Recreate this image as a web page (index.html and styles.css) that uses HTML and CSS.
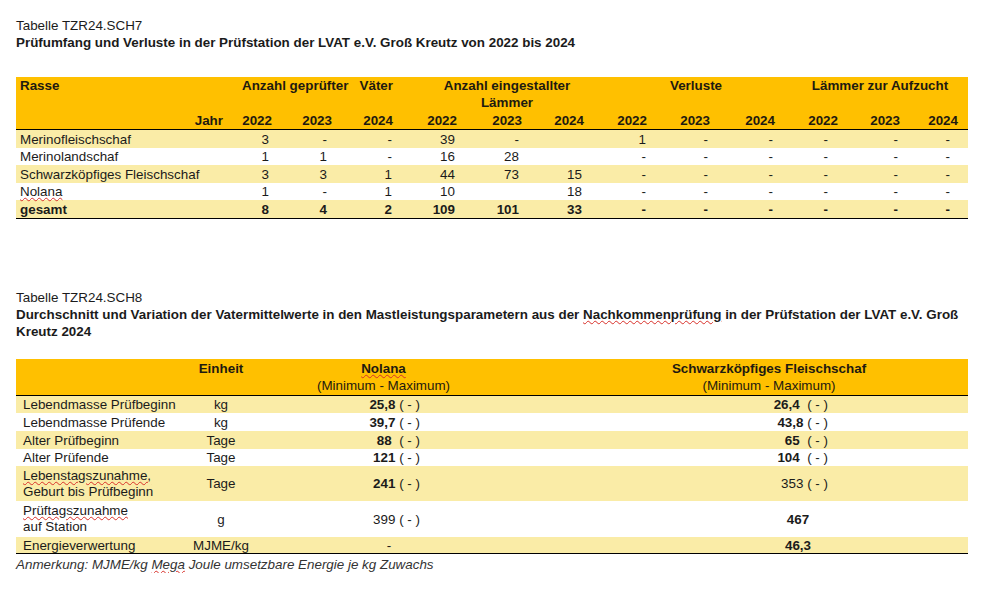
FILE: index.html
```html
<!DOCTYPE html>
<html lang="de">
<head>
<meta charset="utf-8">
<title>Tabelle TZR24.SCH7 / SCH8</title>
<link rel="stylesheet" href="styles.css">
</head>
<body>
<div class="page">
  <div class="cap">Tabelle TZR24.SCH7</div>
  <div class="title">Prüfumfang und Verluste in der Prüfstation der LVAT e.V. Groß Kreutz von 2022 bis 2024</div>

  <div class="t1">
    <div class="t1-head">
      <div class="h-rasse">Rasse</div>
      <div class="h-gepr">Anzahl geprüfter</div>
      <div class="h-vaeter">Väter</div>
      <div class="h-eing">Anzahl eingestallter<br>Lämmer</div>
      <div class="h-verl">Verluste</div>
      <div class="h-aufz">Lämmer zur Aufzucht</div>
      <div class="h-jahr">Jahr</div>
      <div class="yr">2022</div><div class="yr">2023</div><div class="yr">2024</div>
      <div class="yr">2022</div><div class="yr">2023</div><div class="yr">2024</div>
      <div class="yr">2022</div><div class="yr">2023</div><div class="yr">2024</div>
      <div class="yr">2022</div><div class="yr">2023</div><div class="yr yr-last">2024</div>
    </div>
    <div class="t1-body">
      <div class="r1 stripe h18"><div>Merinofleischschaf</div><div>3</div><div>-</div><div>-</div><div>39</div><div>-</div><div></div><div>1</div><div>-</div><div>-</div><div>-</div><div>-</div><div>-</div></div>
      <div class="r1 h17"><div>Merinolandschaf</div><div>1</div><div>1</div><div>-</div><div>16</div><div>28</div><div></div><div>-</div><div>-</div><div>-</div><div>-</div><div>-</div><div>-</div></div>
      <div class="r1 stripe h18"><div>Schwarzköpfiges Fleischschaf</div><div>3</div><div>3</div><div>1</div><div>44</div><div>73</div><div>15</div><div>-</div><div>-</div><div>-</div><div>-</div><div>-</div><div>-</div></div>
      <div class="r1 h17"><div><span class="sp">Nolana</span></div><div>1</div><div>-</div><div>1</div><div>10</div><div></div><div>18</div><div>-</div><div>-</div><div>-</div><div>-</div><div>-</div><div>-</div></div>
      <div class="r1 stripe h18 bold"><div>gesamt</div><div>8</div><div>4</div><div>2</div><div>109</div><div>101</div><div>33</div><div>-</div><div>-</div><div>-</div><div>-</div><div>-</div><div>-</div></div>
    </div>
  </div>

  <div class="cap cap2">Tabelle TZR24.SCH8</div>
  <div class="title">Durchschnitt und Variation der Vatermittelwerte in den Mastleistungsparametern aus der <span class="sp">Nachkommenprüfung</span> in der Prüfstation der LVAT e.V. Groß<br>Kreutz 2024</div>

  <div class="t2">
    <div class="t2-head">
      <div></div>
      <div class="c-unit"><b>Einheit</b></div>
      <div class="c-nol"><b class="sp">Nolana</b><br>(Minimum - Maximum)</div>
      <div class="c-sch"><b>Schwarzköpfiges Fleischschaf</b><br>(Minimum - Maximum)</div>
    </div>
    <div class="t2-body">
      <div class="r2 stripe h17"><div class="lbl">Lebendmasse Prüfbeginn</div><div class="unit">kg</div><div class="nol"><b>25,8</b> ( - )</div><div class="sch"><b>26,4</b>&nbsp; ( - )</div></div>
      <div class="r2 h18"><div class="lbl">Lebendmasse Prüfende</div><div class="unit">kg</div><div class="nol"><b>39,7</b> ( - )</div><div class="sch"><b>43,8</b> ( - )</div></div>
      <div class="r2 stripe h18"><div class="lbl">Alter Prüfbeginn</div><div class="unit">Tage</div><div class="nol"><b>88</b>&nbsp; ( - )</div><div class="sch"><b>65</b>&nbsp; ( - )</div></div>
      <div class="r2 h17"><div class="lbl">Alter Prüfende</div><div class="unit">Tage</div><div class="nol"><b>121</b> ( - )</div><div class="sch"><b>104</b>&nbsp; ( - )</div></div>
      <div class="r2 stripe h35"><div class="lbl two"><span class="sp">Lebenstagszunahme,</span><br>Geburt bis Prüfbeginn</div><div class="unit">Tage</div><div class="nol"><b>241</b> ( - )</div><div class="sch">353 ( - )</div></div>
      <div class="r2 h36"><div class="lbl two"><span class="sp">Prüftagszunahme</span><br>auf Station</div><div class="unit">g</div><div class="nol">399 ( - )</div><div class="sch-c"><b>467</b></div></div>
      <div class="r2 stripe h16"><div class="lbl">Energieverwertung</div><div class="unit">MJME/kg</div><div class="nol-c">-</div><div class="sch-c"><b>46,3</b></div></div>
    </div>
  </div>

  <div class="note">Anmerkung: MJME/kg <span class="sp">Mega</span> Joule umsetzbare Energie je kg Zuwachs</div>
</div>
</body>
</html>
```
FILE: styles.css
```css
html, body {
  margin: 0;
  padding: 0;
  background: #ffffff;
}

body {
  font-family: "Liberation Sans", Arial, sans-serif;
  font-size: 13.4px;
  line-height: 17px;
  color: #1b1b1b;
}

.page {
  padding: 17px 0 0 16px;
  width: 952px;
}

.cap {
  white-space: nowrap;
}

.cap2 {
  margin-top: 70px;
}

.title {
  font-weight: bold;
  white-space: nowrap;
}

.sp {
  text-decoration: underline wavy #d8302a;
  text-decoration-thickness: 1px;
  text-underline-offset: 1px;
}

.bold {
  font-weight: bold;
}

/* ---------- Table 1 ---------- */
.t1 {
  margin-top: 26px;
  width: 952px;
}

.t1-head,
.r1 {
  display: grid;
  grid-template-columns: 214px 46px 60px 61px 64px 65px 62px 63px 63px 65px 63px 62px 64px;
}

.t1-head {
  grid-template-rows: 35px 17px;
  background: #ffc000;
  font-weight: bold;
  border-bottom: 1px solid #000;
  color: #1e1a10;
}

.h-rasse {
  grid-column: 1;
  grid-row: 1;
  padding-left: 4px;
}

.h-gepr {
  grid-column: 2 / span 2;
  grid-row: 1;
  padding-left: 12px;
  white-space: nowrap;
}

.h-vaeter {
  grid-column: 4;
  grid-row: 1;
  text-align: right;
  padding-right: 4px;
}

.h-eing {
  grid-column: 5 / span 3;
  grid-row: 1;
  text-align: center;
  padding-left: 29px;
  white-space: nowrap;
}

.h-verl {
  grid-column: 8 / span 3;
  grid-row: 1;
  text-align: center;
  padding-left: 25px;
}

.h-aufz {
  grid-column: 11 / span 3;
  grid-row: 1;
  text-align: center;
  padding-left: 13px;
  white-space: nowrap;
}

.h-jahr {
  grid-column: 1;
  grid-row: 2;
  text-align: right;
  padding-right: 7px;
}

.yr {
  grid-row: 2;
  text-align: right;
  padding-right: 4px;
}

.yr-last {
  padding-right: 10px;
}

.t1-body {
  border-bottom: 1px solid #000;
}

.r1 {
  align-items: center;
}

.r1 > div {
  text-align: right;
  white-space: nowrap;
}

.r1 > div:nth-child(1) { text-align: left; padding-left: 4px; }
.r1 > div:nth-child(2) { padding-right: 7px; }
.r1 > div:nth-child(3) { padding-right: 9px; }
.r1 > div:nth-child(4) { padding-right: 5px; }
.r1 > div:nth-child(5) { padding-right: 6px; }
.r1 > div:nth-child(6) { padding-right: 7px; }
.r1 > div:nth-child(7) { padding-right: 6px; }
.r1 > div:nth-child(8) { padding-right: 5px; }
.r1 > div:nth-child(9) { padding-right: 6px; }
.r1 > div:nth-child(10) { padding-right: 6px; }
.r1 > div:nth-child(11) { padding-right: 14px; }
.r1 > div:nth-child(12) { padding-right: 6px; }
.r1 > div:nth-child(13) { padding-right: 18px; }

.stripe {
  background: #faeca7;
}

.h16 { height: 16px; }
.h17 { height: 17px; }
.h18 { height: 18px; }
.h35 { height: 35px; }
.h36 { height: 36px; }

/* ---------- Table 2 ---------- */
.t2 {
  margin-top: 19px;
  width: 952px;
}

.t2-head,
.r2 {
  display: grid;
  grid-template-columns: 154px 102px 223px 473px;
}

.t2-head {
  background: #ffc000;
  padding: 1px 0;
  height: 34px;
  border-bottom: 1px solid #000;
  color: #1e1a10;
}

.c-unit,
.c-nol,
.c-sch {
  text-align: center;
  white-space: nowrap;
}

.c-sch {
  padding-left: 75px;
}

.t2-body {
  border-bottom: 1px solid #000;
}

.r2 {
  align-items: center;
}

.r2 > div {
  white-space: nowrap;
}

.lbl {
  padding-left: 7px;
}

.lbl.two {
  line-height: 16px;
}

.unit {
  text-align: center;
}

.nol {
  text-align: right;
  padding-right: 75px;
}

.nol-c {
  text-align: center;
  padding-left: 11px;
}

.sch {
  text-align: right;
  padding-right: 140px;
}

.sch-c {
  text-align: center;
  padding-left: 133px;
}

.note {
  margin-top: 2px;
  font-style: italic;
  color: #333;
  white-space: nowrap;
}
```
